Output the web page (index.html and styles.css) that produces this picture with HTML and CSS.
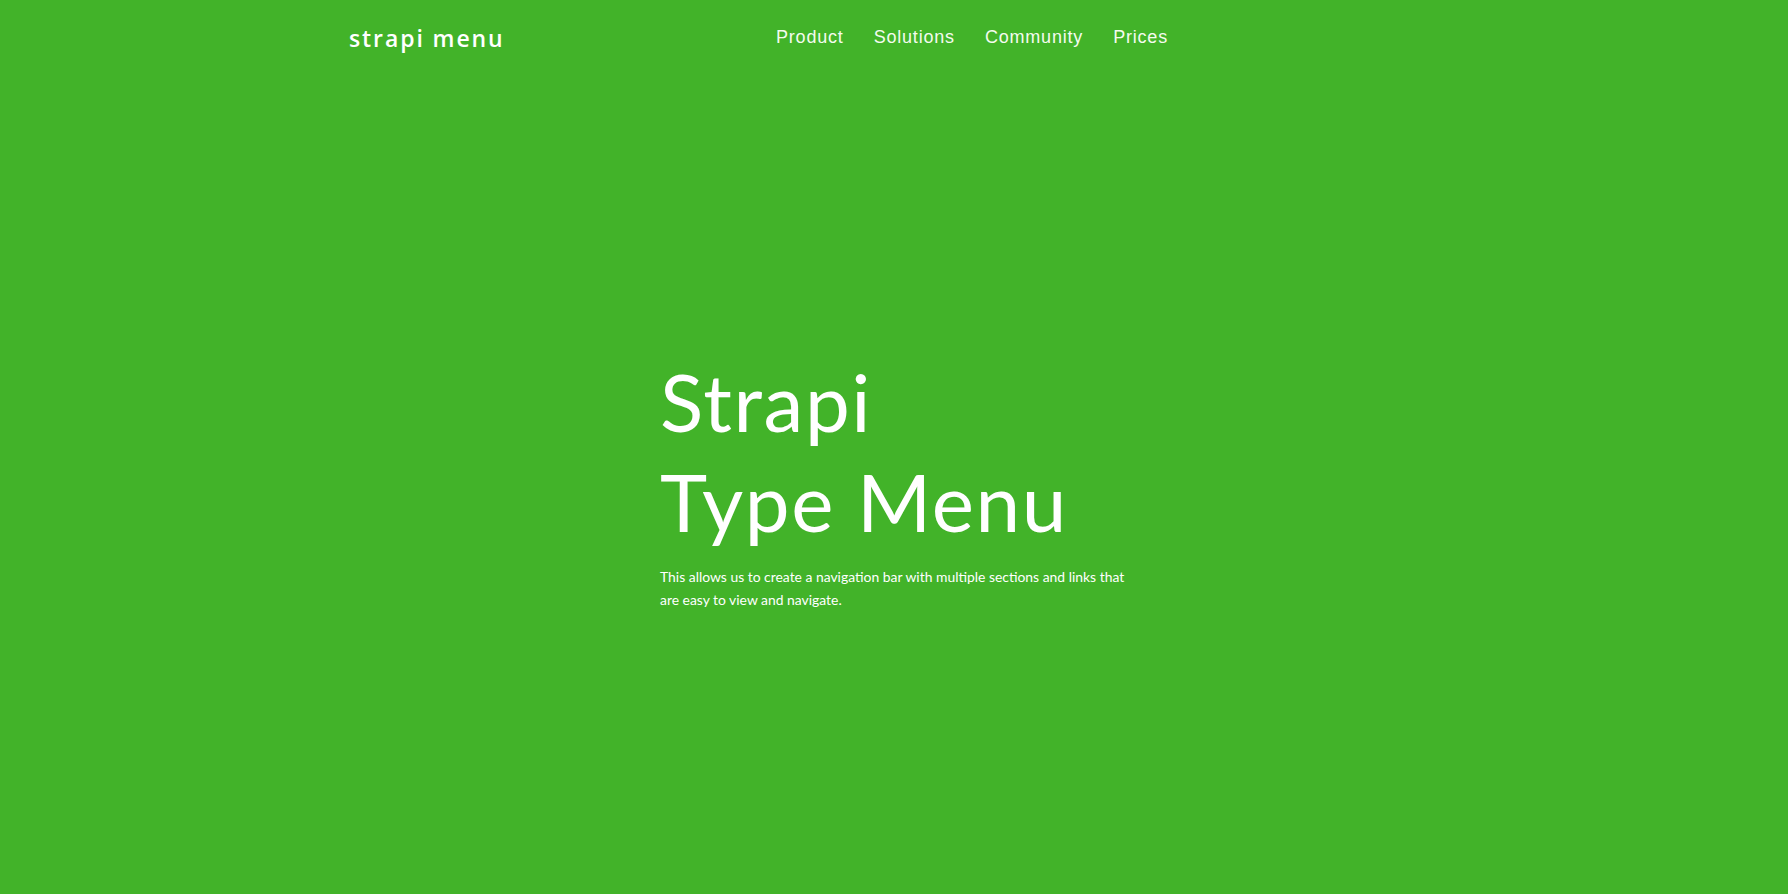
FILE: index.html
```html
<!DOCTYPE html>
<html lang="en">
<head>
<meta charset="utf-8">
<title>strapi menu</title>
<link rel="stylesheet" href="styles.css">
</head>
<body>
<header class="topbar">
  <div class="logo">strapi menu</div>
  <nav class="nav">
    <a class="nav-link" href="#">Product</a>
    <a class="nav-link" href="#">Solutions</a>
    <a class="nav-link" href="#">Community</a>
    <a class="nav-link" href="#">Prices</a>
  </nav>
</header>
<main class="hero">
  <div class="hero-inner">
    <h1 class="hero-title">Strapi<br>Type Menu</h1>
    <p class="hero-text">This allows us to create a navigation bar with multiple sections and links that are easy to view and navigate.</p>
  </div>
</main>
</body>
</html>
```
FILE: styles.css
```css
* { box-sizing: border-box; }
html, body {
  margin: 0;
  padding: 0;
  height: 100%;
}
body {
  background: #42b329;
  color: #ffffff;
  font-family: "Liberation Sans", Arial, sans-serif;
  overflow: hidden;
}
.topbar {
  display: flex;
  align-items: center;
  height: 76px;
  padding: 0 0 0 349px;
}
.logo {
  font-family: "Open Sans", sans-serif;
  font-weight: 600;
  font-size: 23px;
  letter-spacing: 1.9px;
  color: #fff;
  width: 427px;
}
.nav {
  display: flex;
  gap: 30px;
  margin-top: -2px;
}
.nav-link {
  color: #f4fbef;
  text-decoration: none;
  font-family: "Liberation Sans", Arial, sans-serif;
  font-size: 18px;
  letter-spacing: 0.8px;
}
.hero {
  padding-left: 660px;
  padding-top: 275px;
}
.hero-title {
  margin: 0;
  font-family: "Lato", sans-serif;
  font-weight: 400;
  font-size: 80px;
  line-height: 100px;
  letter-spacing: 1.6px;
}
.hero-text {
  margin: 14px 0 0;
  width: 480px;
  font-family: "Lato", sans-serif;
  font-size: 13.9px;
  line-height: 23px;
}
```
